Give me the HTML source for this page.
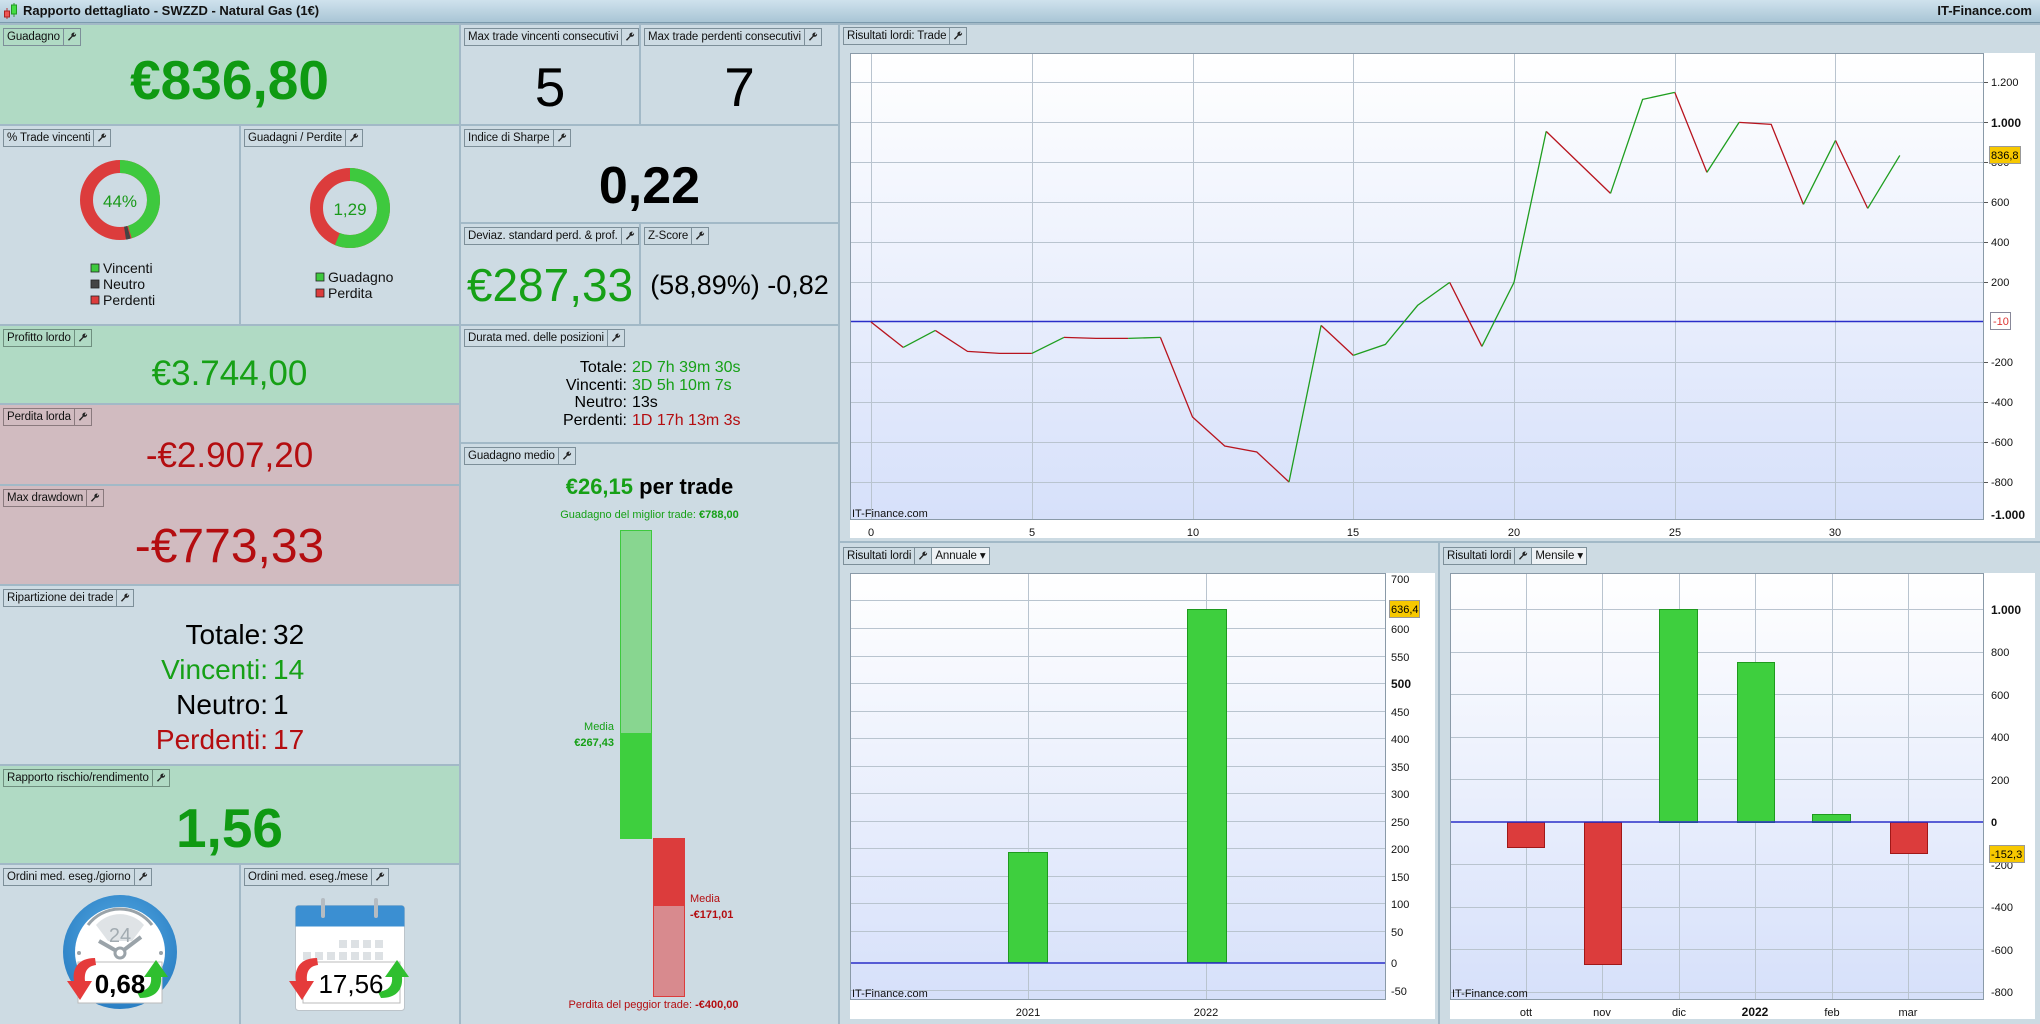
<!DOCTYPE html>
<html><head><meta charset="utf-8">
<style>
*{margin:0;padding:0;box-sizing:border-box}
body{width:2040px;height:1024px;background:#a2b9c7;font-family:"Liberation Sans",Arial,sans-serif;position:relative;overflow:hidden}
.p{position:absolute;background:#cddbe3}
.g{background:#b0dac4}
.r{background:#d1bbc0}
.h{position:absolute;left:3px;top:3px;height:18px;border:1px solid #7d8f99;font-size:11.5px;line-height:16px;display:flex;color:#111;white-space:nowrap;letter-spacing:-0.1px}
.h span{padding:0 3px}
.h i{width:17px;border-left:1px solid #7d8f99;display:flex;align-items:center;justify-content:center}
.t{position:absolute;left:0;right:0;text-align:center;white-space:nowrap}
.ab{position:absolute;white-space:nowrap}
</style></head><body>
<div style="position:absolute;left:0;top:0;width:2040px;height:23px;background:linear-gradient(#cfe2ed,#a9c5d5);border-bottom:1px solid #7c9bae">
<svg style="position:absolute;left:3px;top:3px" width="16" height="17"><line x1="4" y1="5" x2="4" y2="16" stroke="#b33"/><rect x="1.5" y="8" width="5" height="6" fill="#e55" stroke="#a22"/><line x1="11" y1="0" x2="11" y2="14" stroke="#393"/><rect x="8.5" y="2" width="5" height="9" fill="#4d4" stroke="#292"/></svg>
<div class="ab" style="left:23px;top:3px;font-size:13px;font-weight:bold;color:#111">Rapporto dettagliato - SWZZD - Natural Gas (1€)</div>
<div class="ab" style="right:8px;top:3px;font-size:13px;font-weight:bold;color:#111">IT-Finance.com</div>
</div>

<svg width="0" height="0" style="position:absolute"><defs><symbol id="w" viewBox="0 0 10 10"><path d="M9 1.5a2.5 2.5 0 0 1-3.3 3.1L2 8.8 0.9 7.7 4.6 4A2.5 2.5 0 0 1 7.9 0.7L6.6 2.2 7.6 3.2z" fill="#222"/></symbol></defs></svg>

<div class="p g" style="left:0;top:25px;width:459px;height:99px"><div class="h"><span>Guadagno</span><i><svg width="10" height="10"><use href="#w"/></svg></i></div>
<div class="t" style="top:15px;font-size:55px;font-weight:bold;color:#0f9a12;line-height:80px">€836,80</div></div>

<div class="p" style="left:0;top:126px;width:239px;height:198px"><div class="h"><span>% Trade vincenti</span><i><svg width="10" height="10"><use href="#w"/></svg></i></div>
<svg class="ab" style="left:0;top:0" width="239" height="198">
<g transform="translate(120 74) rotate(-90)"><circle r="33.5" fill="none" stroke="#dc3c3c" stroke-width="13"/><circle r="33.5" fill="none" stroke="#3ec93e" stroke-width="13" stroke-dasharray="95 200"/><circle r="33.5" fill="none" stroke="#444" stroke-width="13" stroke-dasharray="0 96 4 200"/></g>
<text x="120" y="81" font-size="17" fill="#1a9a1a" text-anchor="middle" font-family="Liberation Sans">44%</text>
<rect x="91" y="138" width="8" height="8" fill="#3ec93e" stroke="#222" stroke-width=".8"/><rect x="91" y="154" width="8" height="8" fill="#444" stroke="#222" stroke-width=".8"/><rect x="91" y="170" width="8" height="8" fill="#dc3c3c" stroke="#222" stroke-width=".8"/>
<g font-size="14" fill="#111" font-family="Liberation Sans"><text x="103" y="147">Vincenti</text><text x="103" y="163">Neutro</text><text x="103" y="179">Perdenti</text></g>
</svg></div>

<div class="p" style="left:241px;top:126px;width:218px;height:198px"><div class="h"><span>Guadagni / Perdite</span><i><svg width="10" height="10"><use href="#w"/></svg></i></div>
<svg class="ab" style="left:0;top:0" width="218" height="198">
<g transform="translate(109 82) rotate(-90)"><circle r="33.5" fill="none" stroke="#dc3c3c" stroke-width="13"/><circle r="33.5" fill="none" stroke="#3ec93e" stroke-width="13" stroke-dasharray="118 300"/></g>
<text x="109" y="89" font-size="17" fill="#1a9a1a" text-anchor="middle" font-family="Liberation Sans">1,29</text>
<rect x="75" y="147" width="8" height="8" fill="#3ec93e" stroke="#222" stroke-width=".8"/><rect x="75" y="163" width="8" height="8" fill="#dc3c3c" stroke="#222" stroke-width=".8"/>
<g font-size="14" fill="#111" font-family="Liberation Sans"><text x="87" y="156">Guadagno</text><text x="87" y="172">Perdita</text></g>
</svg></div>

<div class="p g" style="left:0;top:326px;width:459px;height:77px"><div class="h" style="border-color:#6f8f7f"><span>Profitto lordo</span><i style="border-color:#6f8f7f"><svg width="10" height="10"><use href="#w"/></svg></i></div>
<div class="t" style="top:28px;font-size:35px;color:#16a016;line-height:40px">€3.744,00</div></div>

<div class="p r" style="left:0;top:405px;width:459px;height:79px"><div class="h" style="border-color:#8a7a7e"><span>Perdita lorda</span><i style="border-color:#8a7a7e"><svg width="10" height="10"><use href="#w"/></svg></i></div>
<div class="t" style="top:31px;font-size:35px;color:#b40d10;line-height:40px">-€2.907,20</div></div>

<div class="p r" style="left:0;top:486px;width:459px;height:98px"><div class="h" style="border-color:#8a7a7e"><span>Max drawdown</span><i style="border-color:#8a7a7e"><svg width="10" height="10"><use href="#w"/></svg></i></div>
<div class="t" style="top:33px;font-size:48px;color:#b40d10;line-height:56px">-€773,33</div></div>

<div class="p" style="left:0;top:586px;width:459px;height:178px"><div class="h"><span>Ripartizione dei trade</span><i><svg width="10" height="10"><use href="#w"/></svg></i></div>
<div style="position:absolute;left:0;top:31px;width:459px;font-size:28px;line-height:35px">
<div style="display:flex"><span style="width:268px;text-align:right">Totale:</span><span style="padding-left:5px">32</span></div>
<div style="display:flex;color:#16a016"><span style="width:268px;text-align:right">Vincenti:</span><span style="padding-left:5px">14</span></div>
<div style="display:flex"><span style="width:268px;text-align:right">Neutro:</span><span style="padding-left:5px">1</span></div>
<div style="display:flex;color:#b40d10"><span style="width:268px;text-align:right">Perdenti:</span><span style="padding-left:5px">17</span></div>
</div></div>

<div class="p g" style="left:0;top:766px;width:459px;height:97px"><div class="h" style="border-color:#6f8f7f"><span>Rapporto rischio/rendimento</span><i style="border-color:#6f8f7f"><svg width="10" height="10"><use href="#w"/></svg></i></div>
<div class="t" style="top:30px;font-size:55px;font-weight:bold;color:#0f9a12;line-height:64px">1,56</div></div>

<div class="p" style="left:0;top:865px;width:239px;height:159px"><div class="h"><span>Ordini med. eseg./giorno</span><i><svg width="10" height="10"><use href="#w"/></svg></i></div>
<svg class="ab" style="left:0;top:0" width="239" height="159">
<defs><radialGradient id="bl" cx=".5" cy=".4" r=".6"><stop offset="0" stop-color="#5aaee6"/><stop offset="1" stop-color="#2a7fc4"/></radialGradient></defs>
<circle cx="120" cy="87" r="57" fill="url(#bl)"/><circle cx="120" cy="87" r="45" fill="#fff"/>
<path d="M96 60 A32 32 0 0 1 144 60 L132 76 L108 76Z" fill="#dfe3e6"/>
<path d="M88 60 A40 40 0 0 1 152 60" fill="none" stroke="#9aa3a9" stroke-width="3"/>
<text x="120" y="77" font-size="20" fill="#a2abb1" text-anchor="middle" font-family="Liberation Sans">24</text>
<path d="M99 76 L120 88 L141 72" fill="none" stroke="#9aa3a9" stroke-width="4"/><circle cx="120" cy="88" r="5" fill="#fff" stroke="#9aa3a9" stroke-width="3"/>
<circle cx="79" cy="88" r="2" fill="#9aa3a9"/><circle cx="161" cy="88" r="2" fill="#9aa3a9"/>
<rect x="78" y="97" width="84" height="41" fill="#fff" stroke="#bbb"/>
<path d="M95 93 C78 93 72 104 74 116 L67 116 L80 135 L92 116 L85 116 C84 106 88 101 96 100Z" fill="#e53b3b"/>
<path d="M140 133 C156 133 162 124 161 112 L168 112 L156 95 L144 112 L151 112 C152 121 147 126 137 127Z" fill="#2fbf2f"/>
<text x="120" y="128" font-size="26" font-weight="bold" fill="#000" text-anchor="middle" font-family="Liberation Sans">0,68</text>
</svg></div>

<div class="p" style="left:241px;top:865px;width:218px;height:159px"><div class="h"><span>Ordini med. eseg./mese</span><i><svg width="10" height="10"><use href="#w"/></svg></i></div>
<svg class="ab" style="left:0;top:0" width="218" height="159">
<rect x="54.5" y="40.5" width="109" height="105" rx="3" fill="#fff" stroke="#bcc4ca"/>
<path d="M54.5 43.5 a3 3 0 0 1 3 -3 h103 a3 3 0 0 1 3 3 v18 h-109z" fill="#3b8fd2"/>
<rect x="80" y="33" width="4" height="20" rx="2" fill="#b5bcc2"/><rect x="133" y="33" width="4" height="20" rx="2" fill="#b5bcc2"/>
<g fill="#dde1e4"><rect x="98" y="75" width="8" height="8"/><rect x="110" y="75" width="8" height="8"/><rect x="122" y="75" width="8" height="8"/><rect x="134" y="75" width="8" height="8"/>
<rect x="62" y="87" width="8" height="8"/><rect x="74" y="87" width="8" height="8"/><rect x="86" y="87" width="8" height="8"/><rect x="98" y="87" width="8" height="8"/><rect x="110" y="87" width="8" height="8"/><rect x="122" y="87" width="8" height="8"/><rect x="134" y="87" width="8" height="8"/></g>
<rect x="62" y="97" width="97" height="41" fill="#fff" stroke="#bbb"/>
<path d="M76 93 C59 93 53 104 55 116 L48 116 L61 135 L73 116 L66 116 C65 106 69 101 77 100Z" fill="#e53b3b"/>
<path d="M140 133 C156 133 162 124 161 112 L168 112 L156 95 L144 112 L151 112 C152 121 147 126 137 127Z" fill="#2fbf2f"/>
<text x="110" y="128" font-size="26" fill="#000" text-anchor="middle" font-family="Liberation Sans">17,56</text>
</svg></div>

<div class="p" style="left:461px;top:25px;width:178px;height:99px"><div class="h"><span>Max trade vincenti consecutivi</span><i><svg width="10" height="10"><use href="#w"/></svg></i></div>
<div class="t" style="top:32px;font-size:55px;line-height:60px">5</div></div>
<div class="p" style="left:641px;top:25px;width:197px;height:99px"><div class="h"><span>Max trade perdenti consecutivi</span><i><svg width="10" height="10"><use href="#w"/></svg></i></div>
<div class="t" style="top:32px;font-size:55px;line-height:60px">7</div></div>
<div class="p" style="left:461px;top:126px;width:377px;height:96px"><div class="h"><span>Indice di Sharpe</span><i><svg width="10" height="10"><use href="#w"/></svg></i></div>
<div class="t" style="top:30px;font-size:52px;font-weight:bold;line-height:60px">0,22</div></div>
<div class="p" style="left:461px;top:224px;width:178px;height:100px"><div class="h"><span>Deviaz. standard perd. &amp; prof.</span><i><svg width="10" height="10"><use href="#w"/></svg></i></div>
<div class="t" style="top:34px;font-size:46px;color:#16a016;line-height:54px">€287,33</div></div>
<div class="p" style="left:641px;top:224px;width:197px;height:100px"><div class="h"><span>Z-Score</span><i><svg width="10" height="10"><use href="#w"/></svg></i></div>
<div class="t" style="top:45px;font-size:27px;line-height:32px">(58,89%) -0,82</div></div>

<div class="p" style="left:461px;top:326px;width:377px;height:116px"><div class="h"><span>Durata med. delle posizioni</span><i><svg width="10" height="10"><use href="#w"/></svg></i></div>
<div style="position:absolute;left:0;top:33px;width:377px;font-size:16px;line-height:17.6px">
<div style="display:flex"><span style="width:166px;text-align:right">Totale:</span><span style="padding-left:5px;color:#16a016">2D 7h 39m 30s</span></div>
<div style="display:flex"><span style="width:166px;text-align:right">Vincenti:</span><span style="padding-left:5px;color:#16a016">3D 5h 10m 7s</span></div>
<div style="display:flex"><span style="width:166px;text-align:right">Neutro:</span><span style="padding-left:5px">13s</span></div>
<div style="display:flex"><span style="width:166px;text-align:right">Perdenti:</span><span style="padding-left:5px;color:#b40d10">1D 17h 13m 3s</span></div>
</div></div>

<div class="p" style="left:461px;top:444px;width:377px;height:580px"><div class="h"><span>Guadagno medio</span><i><svg width="10" height="10"><use href="#w"/></svg></i></div>
<div class="t" style="top:30px;font-size:22px;font-weight:bold;line-height:26px"><span style="color:#16a016">€26,15</span> per trade</div>
<div class="t" style="top:65px;font-size:11px;color:#16a016">Guadagno del miglior trade: <b>€788,00</b></div>
<div class="ab" style="left:159px;top:86px;width:32px;height:203px;background:#88d690;border:1px solid #3ec93e;border-bottom:none"></div>
<div class="ab" style="left:159px;top:289px;width:32px;height:106px;background:#3ecf3e"></div>
<div class="ab" style="left:192px;top:394px;width:32px;height:68px;background:#dc3c3c"></div>
<div class="ab" style="left:192px;top:462px;width:32px;height:91px;background:#d88a8e;border:1px solid #dc3c3c;border-top:none"></div>
<div class="ab" style="right:224px;top:275px;font-size:11px;color:#16a016;text-align:right;line-height:16px">Media<br><b>€267,43</b></div>
<div class="ab" style="left:229px;top:447px;font-size:11px;color:#b40d10;line-height:16px">Media<br><b>-€171,01</b></div>
<div class="t" style="top:555px;font-size:11px;color:#b40d10;left:8px">Perdita del peggior trade: <b>-€400,00</b></div>
</div>

<div class="p" style="left:840px;top:25px;width:1200px;height:516px"></div>
<div class="p" style="left:840px;top:543px;width:598px;height:481px"></div>
<div class="p" style="left:1440px;top:543px;width:600px;height:481px"></div>

<svg class="ab" style="left:0;top:0" width="2040" height="1024" font-family="Liberation Sans">
<defs><linearGradient id="bg" x1="0" y1="0" x2="0" y2="1"><stop offset="0" stop-color="#ffffff"/><stop offset="1" stop-color="#d6e0fa"/></linearGradient></defs>
<rect x="850" y="53" width="1185" height="485" fill="#fff"/>
<rect x="850.5" y="53.5" width="1133" height="466" fill="url(#bg)" stroke="#8a9aa8"/>
<g stroke="#b9c4cf" stroke-width="1">
<line x1="851" x2="1983" y1="82.5" y2="82.5"/><line x1="851" x2="1983" y1="122.5" y2="122.5"/><line x1="851" x2="1983" y1="162.5" y2="162.5"/><line x1="851" x2="1983" y1="202.5" y2="202.5"/><line x1="851" x2="1983" y1="242.5" y2="242.5"/><line x1="851" x2="1983" y1="282.5" y2="282.5"/><line x1="851" x2="1983" y1="362.5" y2="362.5"/><line x1="851" x2="1983" y1="402.5" y2="402.5"/><line x1="851" x2="1983" y1="442.5" y2="442.5"/><line x1="851" x2="1983" y1="482.5" y2="482.5"/>
<line x1="871.5" x2="871.5" y1="54" y2="519"/><line x1="1032.5" x2="1032.5" y1="54" y2="519"/><line x1="1193.5" x2="1193.5" y1="54" y2="519"/><line x1="1353.5" x2="1353.5" y1="54" y2="519"/><line x1="1514.5" x2="1514.5" y1="54" y2="519"/><line x1="1675.5" x2="1675.5" y1="54" y2="519"/><line x1="1835.5" x2="1835.5" y1="54" y2="519"/>
</g>
<line x1="851" x2="1983" y1="321.5" y2="321.5" stroke="#2a2ec8" stroke-width="1.5"/>
<path d="M871 322L903.2 347.4M935.3 330.4L967.5 351.4L999.6 353.4L1031.8 353.4M1063.9 337.4L1096.1 338.4L1128.2 338.4M1160.4 337.4L1192.5 417L1224.7 446L1256.8 452L1289 482M1321.1 325.4L1353.3 355.4M1449.7 282.4L1481.9 346.4M1546.2 131.4L1578.3 162.4L1610.5 193.4M1674.8 92.4L1706.9 172.4M1739.1 122.4L1771.2 124.4L1803.4 204.4M1835.5 140.4L1867.7 208.4" fill="none" stroke="#b8141e" stroke-width="1.3"/>
<path d="M903.2 347.4L935.3 330.4M1031.8 353.4L1063.9 337.4M1128.2 338.4L1160.4 337.4M1289 482L1321.1 325.4M1353.3 355.4L1385.4 344.4L1417.6 305.4L1449.7 282.4M1481.9 346.4L1514 282.4L1546.2 131.4M1610.5 193.4L1642.6 99.4L1674.8 92.4M1706.9 172.4L1739.1 122.4M1803.4 204.4L1835.5 140.4M1867.7 208.4L1899.8 155.4" fill="none" stroke="#1f9e1f" stroke-width="1.3"/>
<g stroke="#555"><line x1="1984" x2="1988" y1="82.5" y2="82.5"/><line x1="1984" x2="1988" y1="122.5" y2="122.5"/><line x1="1984" x2="1988" y1="162.5" y2="162.5"/><line x1="1984" x2="1988" y1="202.5" y2="202.5"/><line x1="1984" x2="1988" y1="242.5" y2="242.5"/><line x1="1984" x2="1988" y1="282.5" y2="282.5"/><line x1="1984" x2="1988" y1="362.5" y2="362.5"/><line x1="1984" x2="1988" y1="402.5" y2="402.5"/><line x1="1984" x2="1988" y1="442.5" y2="442.5"/><line x1="1984" x2="1988" y1="482.5" y2="482.5"/></g>
<g font-size="11" fill="#111">
<text x="1991" y="86">1.200</text><text x="1991" y="127" font-weight="bold" font-size="12">1.000</text><text x="1991" y="166">800</text><text x="1991" y="206">600</text><text x="1991" y="246">400</text><text x="1991" y="286">200</text><text x="1991" y="366">-200</text><text x="1991" y="406">-400</text><text x="1991" y="446">-600</text><text x="1991" y="486">-800</text><text x="1991" y="519" font-weight="bold" font-size="12">-1.000</text>
<text x="871" y="536" text-anchor="middle">0</text><text x="1032" y="536" text-anchor="middle">5</text><text x="1193" y="536" text-anchor="middle">10</text><text x="1353" y="536" text-anchor="middle">15</text><text x="1514" y="536" text-anchor="middle">20</text><text x="1675" y="536" text-anchor="middle">25</text><text x="1835" y="536" text-anchor="middle">30</text>
<text x="852" y="517">IT-Finance.com</text>
</g>
<rect x="1989.5" y="146.5" width="31" height="17" fill="#f7c800" stroke="#999"/><text x="1991" y="159" font-size="11">836,8</text>
<rect x="1990.5" y="312.5" width="20" height="17" fill="#fff" stroke="#889"/><text x="1993" y="325" font-size="11" fill="#d33">-10</text>

<rect x="850" y="573" width="585" height="446" fill="#fff"/>
<rect x="850.5" y="573.5" width="535" height="426" fill="url(#bg)" stroke="#8a9aa8"/>
<g stroke="#b9c4cf">
<line x1="851" x2="1385" y1="600.5" y2="600.5"/><line x1="851" x2="1385" y1="628.5" y2="628.5"/><line x1="851" x2="1385" y1="656.5" y2="656.5"/><line x1="851" x2="1385" y1="683.5" y2="683.5"/><line x1="851" x2="1385" y1="711.5" y2="711.5"/><line x1="851" x2="1385" y1="738.5" y2="738.5"/><line x1="851" x2="1385" y1="766.5" y2="766.5"/><line x1="851" x2="1385" y1="793.5" y2="793.5"/><line x1="851" x2="1385" y1="821.5" y2="821.5"/><line x1="851" x2="1385" y1="848.5" y2="848.5"/><line x1="851" x2="1385" y1="876.5" y2="876.5"/><line x1="851" x2="1385" y1="903.5" y2="903.5"/><line x1="851" x2="1385" y1="931.5" y2="931.5"/><line x1="851" x2="1385" y1="990.5" y2="990.5"/>
<line x1="1028.5" x2="1028.5" y1="574" y2="999"/><line x1="1206.5" x2="1206.5" y1="574" y2="999"/></g>
<rect x="1008.5" y="852.5" width="39" height="110" fill="#3ecf3e" stroke="#1e9a1e"/>
<rect x="1187.5" y="609.5" width="39" height="353" fill="#3ecf3e" stroke="#1e9a1e"/>
<line x1="851" x2="1385" y1="963" y2="963" stroke="#2a2ec8" stroke-width="1.5"/>
<g font-size="11" fill="#111">
<text x="1391" y="583">700</text><text x="1391" y="633">600</text><text x="1391" y="661">550</text><text x="1391" y="688" font-weight="bold" font-size="12">500</text><text x="1391" y="716">450</text><text x="1391" y="743">400</text><text x="1391" y="771">350</text><text x="1391" y="798">300</text><text x="1391" y="826">250</text><text x="1391" y="853">200</text><text x="1391" y="881">150</text><text x="1391" y="908">100</text><text x="1391" y="936">50</text><text x="1391" y="967">0</text><text x="1391" y="995">-50</text>
<text x="1028" y="1016" text-anchor="middle">2021</text><text x="1206" y="1016" text-anchor="middle">2022</text>
<text x="852" y="997">IT-Finance.com</text></g>
<rect x="1389.5" y="600.5" width="30" height="17" fill="#f7c800" stroke="#999"/><text x="1391" y="613" font-size="11">636,4</text>

<rect x="1450" y="573" width="585" height="446" fill="#fff"/>
<rect x="1450.5" y="573.5" width="533" height="426" fill="url(#bg)" stroke="#8a9aa8"/>
<g stroke="#b9c4cf">
<line x1="1451" x2="1983" y1="609.5" y2="609.5"/><line x1="1451" x2="1983" y1="652.5" y2="652.5"/><line x1="1451" x2="1983" y1="694.5" y2="694.5"/><line x1="1451" x2="1983" y1="737.5" y2="737.5"/><line x1="1451" x2="1983" y1="779.5" y2="779.5"/><line x1="1451" x2="1983" y1="864.5" y2="864.5"/><line x1="1451" x2="1983" y1="907.5" y2="907.5"/><line x1="1451" x2="1983" y1="949.5" y2="949.5"/><line x1="1451" x2="1983" y1="992.5" y2="992.5"/>
<line x1="1526.5" x2="1526.5" y1="574" y2="999"/><line x1="1602.5" x2="1602.5" y1="574" y2="999"/><line x1="1679.5" x2="1679.5" y1="574" y2="999"/><line x1="1755.5" x2="1755.5" y1="574" y2="999"/><line x1="1832.5" x2="1832.5" y1="574" y2="999"/><line x1="1908.5" x2="1908.5" y1="574" y2="999"/></g>
<rect x="1507.5" y="822.5" width="37" height="25" fill="#dc3c3c" stroke="#a01818"/>
<rect x="1584.5" y="822.5" width="37" height="142" fill="#dc3c3c" stroke="#a01818"/>
<rect x="1659.5" y="609.5" width="38" height="213" fill="#3ecf3e" stroke="#1e9a1e"/>
<rect x="1737.5" y="662.5" width="37" height="160" fill="#3ecf3e" stroke="#1e9a1e"/>
<rect x="1812.5" y="814.5" width="38" height="8" fill="#3ecf3e" stroke="#1e9a1e"/>
<rect x="1890.5" y="822.5" width="37" height="31" fill="#dc3c3c" stroke="#a01818"/>
<line x1="1451" x2="1983" y1="822" y2="822" stroke="#2a2ec8" stroke-width="1.5"/>
<g font-size="11" fill="#111">
<text x="1991" y="614" font-weight="bold" font-size="12">1.000</text><text x="1991" y="656">800</text><text x="1991" y="699">600</text><text x="1991" y="741">400</text><text x="1991" y="784">200</text><text x="1991" y="826" font-weight="bold">0</text><text x="1991" y="869">-200</text><text x="1991" y="911">-400</text><text x="1991" y="954">-600</text><text x="1991" y="996">-800</text>
<text x="1526" y="1016" text-anchor="middle">ott</text><text x="1602" y="1016" text-anchor="middle">nov</text><text x="1679" y="1016" text-anchor="middle">dic</text><text x="1755" y="1016" text-anchor="middle" font-weight="bold" font-size="12">2022</text><text x="1832" y="1016" text-anchor="middle">feb</text><text x="1908" y="1016" text-anchor="middle">mar</text>
<text x="1452" y="997">IT-Finance.com</text></g>
<rect x="1989.5" y="845.5" width="35" height="17" fill="#f7c800" stroke="#999"/><text x="1991" y="858" font-size="11">-152,3</text>
</svg>

<div class="h" style="left:843px;top:27px"><span>Risultati lordi: Trade</span><i><svg width="10" height="10"><use href="#w"/></svg></i></div>
<div class="h" style="left:843px;top:547px"><span>Risultati lordi</span><i><svg width="10" height="10"><use href="#w"/></svg></i><span style="border-left:1px solid #7d8f99;background:#eef2f5">Annuale ▾</span></div>
<div class="h" style="left:1443px;top:547px"><span>Risultati lordi</span><i><svg width="10" height="10"><use href="#w"/></svg></i><span style="border-left:1px solid #7d8f99;background:#eef2f5">Mensile ▾</span></div>
</body></html>
